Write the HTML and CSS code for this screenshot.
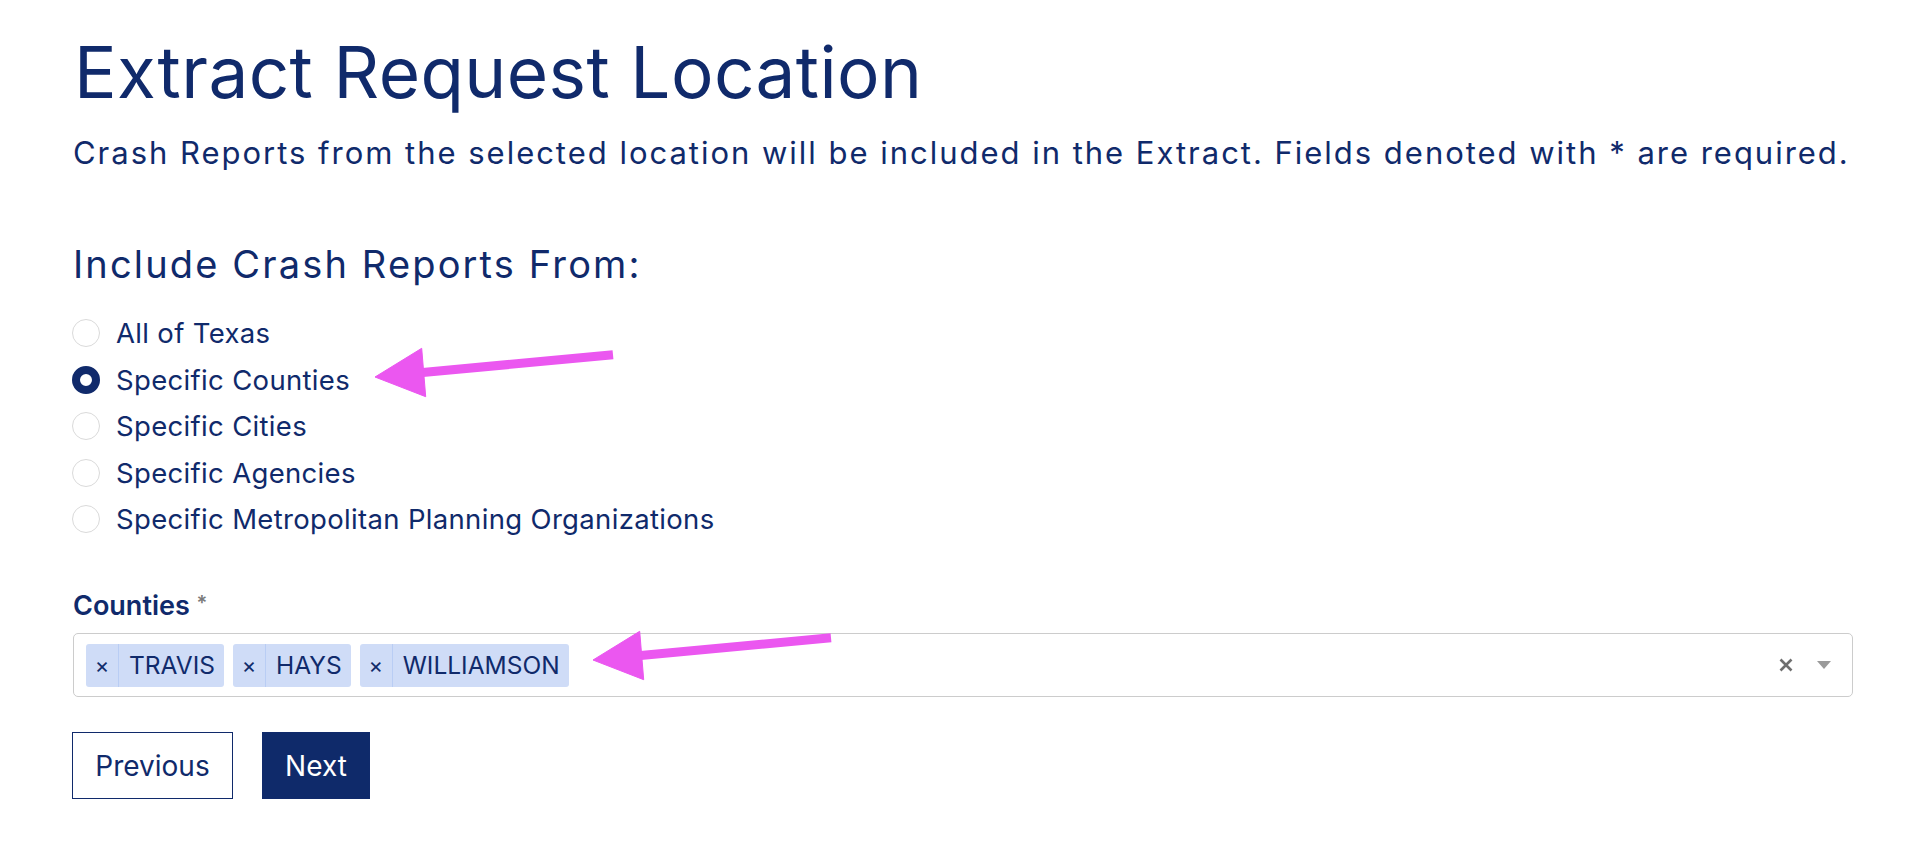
FILE: index.html
```html
<!DOCTYPE html>
<html lang="en">
<head>
<meta charset="utf-8">
<title>Extract Request Location</title>
<link rel="stylesheet" href="styles.css">
</head>
<body>
<main class="page">
  <h1 class="title">Extract Request Location</h1>
  <p class="lead">Crash Reports from the selected location will be included in the Extract. Fields denoted with * are required.</p>

  <section class="scope">
    <h2 class="scope-title">Include Crash Reports From:</h2>
    <div class="choices">
      <label class="choice"><span class="radio"></span><span>All of Texas</span></label>
      <label class="choice"><span class="radio is-checked"></span><span>Specific Counties</span></label>
      <label class="choice"><span class="radio"></span><span>Specific Cities</span></label>
      <label class="choice"><span class="radio"></span><span>Specific Agencies</span></label>
      <label class="choice"><span class="radio"></span><span>Specific Metropolitan Planning Organizations</span></label>
    </div>
  </section>

  <div class="field">
    <div class="field-label">Counties <span class="req">*</span></div>
    <div class="select">
      <div class="tags">
        <span class="tag"><span class="tag-x">×</span><span class="tag-text">TRAVIS</span></span>
        <span class="tag"><span class="tag-x">×</span><span class="tag-text">HAYS</span></span>
        <span class="tag"><span class="tag-x">×</span><span class="tag-text">WILLIAMSON</span></span>
      </div>
      <div class="indicators">
        <svg class="clear" width="16" height="16" viewBox="0 0 16 16"><path d="M2.5 2.5 L13.5 13.5 M13.5 2.5 L2.5 13.5" stroke="#6f6f6f" stroke-width="2.6" fill="none"/></svg>
        <svg class="caret" width="16" height="10" viewBox="0 0 16 10"><path d="M1 1 L15 1 L8 9 Z" fill="#9a9a9a"/></svg>
      </div>
    </div>
  </div>

  <div class="actions">
    <button class="btn btn-outline" type="button">Previous</button>
    <button class="btn btn-primary" type="button">Next</button>
  </div>

  <svg class="annotations" width="1928" height="850" viewBox="0 0 1928 850">
    <g fill="#eb57f0" stroke="#eb57f0">
      <line x1="420" y1="372.8" x2="613" y2="354.7" stroke-width="9"/>
      <polygon points="375,377 421.7,348.3 425.7,396.7" stroke-width="1"/>
      <line x1="638" y1="655.8" x2="831" y2="637.7" stroke-width="9"/>
      <polygon points="593,660 639.7,631.3 643.7,679.7" stroke-width="1"/>
    </g>
  </svg>
</main>
</body>
</html>
```

FILE: styles.css
```css
* { box-sizing: border-box; }

html, body {
  margin: 0;
  padding: 0;
  background: #ffffff;
}

body {
  font-family: Inter, "Open Sans", sans-serif;
  color: #102a6b;
}

.page {
  position: relative;
  padding: 30px 0 0 74px;
  width: 1928px;
  height: 850px;
}

.title {
  margin: 0;
  font-size: 71px;
  font-weight: 400;
  line-height: 85.2px;
  letter-spacing: 0.4px;
}

.lead {
  margin: 19px 0 0 -1px;
  font-size: 31px;
  line-height: 37.2px;
  letter-spacing: 1.98px;
}

.scope-title {
  margin: 71px 0 0 -1px;
  font-size: 38px;
  font-weight: 400;
  line-height: 45.6px;
  letter-spacing: 2.15px;
}

.choices {
  margin-top: 21.75px;
  display: flex;
  flex-direction: column;
}

.choice {
  display: flex;
  align-items: center;
  gap: 16px;
  height: 46.5px;
  font-size: 27.5px;
  letter-spacing: 0.33px;
  margin-left: -2px;
}

.radio {
  width: 28px;
  height: 28px;
  border-radius: 50%;
  border: 1px solid #dadada;
  background: #fff;
  flex: none;
}

.radio.is-checked {
  border: 8.5px solid #102a6b;
}

.field {
  margin-top: 45px;
  width: 1780px;
  margin-left: -1px;
}

.field-label {
  font-size: 27px;
  font-weight: 600;
  line-height: 33px;
}

.req {
  color: #7a7a7a;
  font-size: 20px;
  vertical-align: 5px;
}

.select {
  margin-top: 11px;
  height: 64px;
  border: 1px solid #cccccc;
  border-radius: 5px;
  display: flex;
  align-items: center;
  justify-content: space-between;
  padding: 0 20px 0 12px;
}

.tags {
  display: flex;
  gap: 9px;
}

.tag {
  display: flex;
  align-items: stretch;
  height: 43px;
  background: #cfdcf7;
  border-radius: 3px;
  font-size: 24.5px;
}

.tag-x {
  width: 33px;
  display: flex;
  align-items: center;
  justify-content: center;
  border-right: 1px solid #b9cdf4;
  font-size: 22px;
}

.tag-text {
  display: flex;
  align-items: center;
  padding: 0 9px 0 10px;
}

.indicators {
  display: flex;
  align-items: center;
  gap: 22px;
}

.actions {
  margin-top: 35px;
  margin-left: -2px;
  display: flex;
  gap: 29px;
}

.btn {
  height: 67px;
  font-family: Inter, "Open Sans", sans-serif;
  font-size: 28px;
  padding: 0;
  border: 1.5px solid #102a6b;
  border-radius: 0;
  cursor: pointer;
}

.btn-outline {
  width: 161px;
  background: #fff;
  color: #102a6b;
}

.btn-primary {
  width: 108px;
  background: #0f2a6a;
  color: #fff;
}

.annotations {
  position: absolute;
  left: 0;
  top: 0;
  pointer-events: none;
}
```
